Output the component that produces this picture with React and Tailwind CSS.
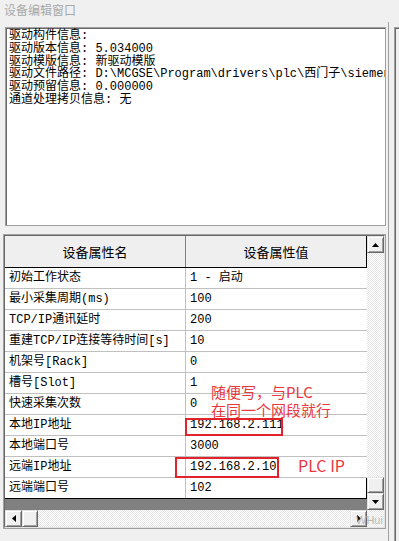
import React from "react";

const rows = [
    ["初始工作状态", "1 - 启动"],
    ["最小采集周期(ms)", "100"],
    ["TCP/IP通讯延时", "200"],
    ["重建TCP/IP连接等待时间[s]", "10"],
    ["机架号[Rack]", "0"],
    ["槽号[Slot]", "1"],
    ["快速采集次数", "0"],
    ["本地IP地址", "192.168.2.111"],
    ["本地端口号", "3000"],
    ["远端IP地址", "192.168.2.10"],
    ["远端端口号", "102"],
];

const info = [
    "驱动构件信息:",
    "驱动版本信息: 5.034000",
    "驱动模版信息: 新驱动模版",
    "驱动文件路径: D:\\MCGSE\\Program\\drivers\\plc\\西门子\\siemens\\Siemens_1200.dll",
    "驱动预留信息: 0.000000",
    "通道处理拷贝信息: 无",
];

function Arrow({ dir }) {
    const pts = {
        up: "0,4 7,4 3.5,0",
        down: "0,0 7,0 3.5,4",
        left: "4,0 4,7 0,3.5",
        right: "0,0 0,7 4,3.5",
    }[dir];
    const vertical = dir === "up" || dir === "down";
    return (
        <svg width={vertical ? 7 : 4} height={vertical ? 4 : 7} viewBox={vertical ? "0 0 7 4" : "0 0 4 7"}>
            <polygon points={pts} fill="#000" />
        </svg>
    );
}

function RaisedButton({ className, children }) {
    return (
        <div
            className={`flex items-center justify-center bg-[#f0f0f0] border border-t-[#e3e3e3] border-l-[#e3e3e3] border-r-[#696969] border-b-[#696969] shadow-[inset_1px_1px_0_#ffffff,inset_-1px_-1px_0_#a0a0a0] ${className}`}
        >
            {children}
        </div>
    );
}

const dither = "bg-[image:repeating-conic-gradient(#ffffff_0%_25%,#e6e6e6_0%_50%)] bg-[length:2px_2px]";

export default function App() {
    return (
        <div className="relative w-[399px] h-[541px] overflow-hidden bg-[#f0f0f0] text-black font-['Liberation_Mono','Noto_Sans_CJK_SC',monospace]">
            <div className="h-[22px] pl-[4px] pt-[2px] text-[12px] leading-[16px] text-[#a8a8a8] font-['Noto_Sans_CJK_SC',sans-serif]">
                设备编辑窗口
            </div>

            <div className="flex h-[519px]">
                {/* left panel */}
                <div className="w-[389px] flex flex-col pl-[3px] pt-[5px] border-r border-[#a0a0a0]">
                    {/* info text box */}
                    <div className="ml-[2px] w-[381px] h-[199px] bg-white border border-[#a0a0a0]">
                        <div className="h-full pl-[3px] pt-[2px] shadow-[inset_1px_1px_0_#696969] overflow-hidden text-[12px] leading-[12.8px]">
                            {info.map((line) => (
                                <div key={line} className="whitespace-nowrap">
                                    {line}
                                </div>
                            ))}
                        </div>
                    </div>

                    {/* property grid */}
                    <div className="mt-[8px] w-[383px] h-[295px] border border-[#a0a0a0]">
                        <div className="h-full border border-t-[#696969] border-l-[#696969] border-r-[#e3e3e3] border-b-[#e3e3e3] flex flex-col">
                            <div className="flex h-[274px]">
                                <div className="w-[362px] flex flex-col">
                                    <div className="flex h-[32px] border-b border-black bg-[#efefef] text-[13px] font-['Noto_Sans_CJK_SC',sans-serif]">
                                        <div className="w-[181px] border-r border-[#808080] flex items-center justify-center">
                                            设备属性名
                                        </div>
                                        <div className="w-[181px] border-r border-black flex items-center justify-center">
                                            设备属性值
                                        </div>
                                    </div>
                                    {rows.map(([name, value], i) => {
                                        const last = i === rows.length - 1;
                                        return (
                                            <div
                                                key={name}
                                                className={`flex h-[21px] bg-white text-[12px] ${last ? "border-b border-black" : "border-b border-[#c0c0c0]"}`}
                                            >
                                                <div className="w-[181px] border-r border-[#c0c0c0] pl-[4px] flex items-center whitespace-nowrap">
                                                    {name}
                                                </div>
                                                <div className={`w-[181px] pl-[4px] flex items-center whitespace-nowrap ${last ? "border-r border-black" : ""}`}>
                                                    {value}
                                                </div>
                                            </div>
                                        );
                                    })}
                                    <div className="flex-1 bg-[#808080]" />
                                </div>
                                {/* vertical scrollbar */}
                                <div className="w-[17px] flex flex-col">
                                    <RaisedButton className="h-[17px]">
                                        <Arrow dir="up" />
                                    </RaisedButton>
                                    <div className={`h-[224px] ${dither}`} />
                                    <RaisedButton className="h-[16px]" />
                                    <RaisedButton className="h-[17px]">
                                        <Arrow dir="down" />
                                    </RaisedButton>
                                </div>
                            </div>
                            {/* horizontal scrollbar */}
                            <div className="flex h-[17px]">
                                <RaisedButton className="w-[17px]">
                                    <Arrow dir="left" />
                                </RaisedButton>
                                <RaisedButton className="w-[16px]" />
                                <div className={`flex-1 ${dither}`} />
                                <RaisedButton className="w-[17px]">
                                    <Arrow dir="right" />
                                </RaisedButton>
                                <div className={`w-[17px] ${dither}`} />
                            </div>
                        </div>
                    </div>
                </div>

                {/* neighbour panel edge */}
                <div className="flex-1 pt-[5px] pl-[5px]">
                    <div className="h-full border-l border-t border-[#a0a0a0] shadow-[inset_1px_1px_0_#696969]" />
                </div>
            </div>

            {/* annotations */}
            <div className="absolute left-[185px] top-[418px] w-[98px] h-[18px] border-2 border-[#e3222b]" />
            <div className="absolute left-[175px] top-[457px] w-[104px] h-[21px] border-2 border-[#e3222b]" />
            <div className="absolute left-[211px] top-[383px] text-[15px] leading-[18px] text-[#e8383e] font-['Noto_Sans_CJK_SC',sans-serif] whitespace-nowrap">
                <div>随便写，与PLC</div>
                <div>在同一个网段就行</div>
            </div>
            <div className="absolute left-[298px] top-[455px] text-[16px] leading-[20px] text-[#e8383e] font-['Noto_Sans_CJK_SC',sans-serif] whitespace-nowrap">
                PLC IP
            </div>
            <div className="absolute left-[356px] top-[513px] text-[11px] leading-[14px] text-[#b8b8b8] font-['Liberation_Sans',sans-serif] whitespace-nowrap">
                WHui
            </div>
        </div>
    );
}
